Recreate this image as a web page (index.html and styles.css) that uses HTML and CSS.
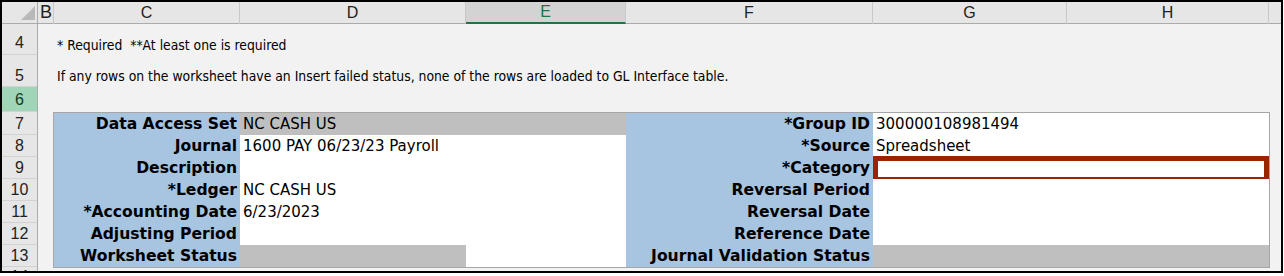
FILE: index.html
```html
<!DOCTYPE html>
<html lang="en">

<head>
    <title>Journal header</title>
    <meta charset="UTF-8">
    <meta name="viewport" content="width=device-width, initial-scale=1.0">
    <link rel="stylesheet" href="styles.css">
</head>
<body>
    <div class="frame">
        <div class="colheads">
            <div class="ch corner">
                <svg width="35" height="21" viewBox="0 0 35 21"><polygon points="33,4 33,18 19,18" fill="#b9b9b9"></polygon></svg>
            </div>
            <div class="ch big">B</div>
            <div class="ch">C</div>
            <div class="ch">D</div>
            <div class="ch sel">E</div>
            <div class="ch">F</div>
            <div class="ch">G</div>
            <div class="ch">H</div>
            <div class="ch last"></div>
        </div>

        <div class="body">
            <div class="rowheads">
                <div class="rh r4">4</div>
                <div class="rh r5">5</div>
                <div class="rh r6 sel">6</div>
                <div class="rh r7">7</div>
                <div class="rh">8</div>
                <div class="rh">9</div>
                <div class="rh">10</div>
                <div class="rh">11</div>
                <div class="rh">12</div>
                <div class="rh">13</div>
                <div class="rh r14">14</div>
            </div>

            <div class="cells">
                <div class="note r4">* Required&nbsp; **At least one is required</div>
                <div class="note r5">If any rows on the worksheet have an Insert failed status, none of the rows are loaded to GL Interface table.</div>
                <div class="note r6"></div>

                <div class="form">
                    <!-- ligne 7 -->
                    <div class="lbl">Data Access Set</div>
                    <div class="val gray span2">NC CASH US</div>
                    <div class="lbl">*Group ID</div>
                    <div class="val span2">300000108981494</div>
                    <!-- ligne 8 -->
                    <div class="lbl">Journal</div>
                    <div class="val">1600 PAY 06/23/23 Payroll</div>
                    <div class="val"></div>
                    <div class="lbl">*Source</div>
                    <div class="val span2">Spreadsheet</div>
                    <!-- ligne 9 -->
                    <div class="lbl">Description</div>
                    <div class="val"></div>
                    <div class="val"></div>
                    <div class="lbl">*Category</div>
                    <div class="val span2 req"></div>
                    <!-- ligne 10 -->
                    <div class="lbl">*Ledger</div>
                    <div class="val">NC CASH US</div>
                    <div class="val"></div>
                    <div class="lbl">Reversal Period</div>
                    <div class="val span2"></div>
                    <!-- ligne 11 -->
                    <div class="lbl">*Accounting Date</div>
                    <div class="val">6/23/2023</div>
                    <div class="val"></div>
                    <div class="lbl">Reversal Date</div>
                    <div class="val span2"></div>
                    <!-- ligne 12 -->
                    <div class="lbl">Adjusting Period</div>
                    <div class="val"></div>
                    <div class="val"></div>
                    <div class="lbl">Reference Date</div>
                    <div class="val span2"></div>
                    <!-- ligne 13 -->
                    <div class="lbl">Worksheet Status</div>
                    <div class="val gray"></div>
                    <div class="val"></div>
                    <div class="lbl">Journal Validation Status</div>
                    <div class="val gray span2"></div>
                </div>
            </div>
        </div>
    </div>
</body>
</html>
```

FILE: styles.css
```css
body {
    margin: 0;
    background-color: #fff;
    font-family: "DejaVu Sans", sans-serif;
    color: #000;
}

.frame {
    width: 1283px;
    height: 273px;
    box-sizing: border-box;
    border: 2px solid #000;
    overflow: hidden;
    background-color: #f2f2f2;
}

/****** EN-TETES DE COLONNES ******/
.colheads {
    display: grid;
    grid-template-columns: 36px 16px 186px 226px 160px 247px 194px 202px 1fr;
    height: 22px;
    box-sizing: border-box;
    background-color: #e6e6e6;
    border-bottom: 1px solid #ababab;
}
.ch {
    box-sizing: border-box;
    border-right: 1px solid #c8c8c8;
    font-family: "Liberation Sans", sans-serif;
    font-size: 16px;
    line-height: 21px;
    text-align: center;
    color: #222;
}
.ch.corner {
    border-right: 1px solid #ababab;
}
.ch.corner svg {
    display: block;
}
.ch.big {
    font-size: 18px;
    text-align: left;
    padding-left: 2px;
}
.ch.sel {
    background-color: #d3d3d3;
    color: #217346;
    border-bottom: 2px solid #217346;
    line-height: 20px;
}
.ch.last {
    border-right: none;
}

/****** EN-TETES DE LIGNES ******/
.body {
    display: flex;
}
.rowheads {
    width: 36px;
    flex: none;
    box-sizing: border-box;
    background-color: #e6e6e6;
    border-right: 1px solid #ababab;
}
.rh {
    height: 22px;
    box-sizing: border-box;
    border-bottom: 1px solid #d2d2d2;
    display: flex;
    align-items: flex-end;
    justify-content: center;
    font-family: "Liberation Sans", sans-serif;
    font-size: 16px;
    line-height: 20px;
    color: #222;
}
.rh.r4 { height: 31px; padding-bottom: 1px; }
.rh.r5 { height: 32px; padding-bottom: 0; }
.rh.r6 { height: 25px; padding-bottom: 1px; }
.rh.r7 { height: 23px; }
.rh.r14 {
    height: 12px;
    border-bottom: none;
    align-items: flex-start;
    overflow: hidden;
}
.rh.sel {
    background-color: #a0d5b7;
    color: #0d3f22;
}

/****** CELLULES ******/
.cells {
    flex: 1;
    padding-left: 15px;
}
.note {
    display: flex;
    align-items: flex-end;
    box-sizing: border-box;
    padding-left: 4px;
    font-family: "DejaVu Sans Condensed", "DejaVu Sans", sans-serif;
    font-size: 13.8px;
    line-height: 17px;
    white-space: nowrap;
}
.note.r4 { height: 31px; padding-bottom: 1px; }
.note.r5 { height: 32px; padding-bottom: 2px; }
.note.r6 { height: 25px; }

.form {
    display: grid;
    grid-template-columns: 186px 226px 160px 247px 194px 202px;
    grid-auto-rows: 22px;
    width: 1217px;
    box-sizing: border-box;
    border: 1px solid #a6a6a6;
}
.lbl {
    background-color: #a7c4e1;
    text-align: right;
    padding-right: 3px;
    font-weight: bold;
    font-size: 15.6px;
    line-height: 22px;
    white-space: nowrap;
}
.val {
    background-color: #fff;
    padding-left: 3px;
    font-size: 15px;
    line-height: 22px;
    white-space: nowrap;
}
.val.gray {
    background-color: #bfbfbf;
}
.span2 {
    grid-column: span 2;
}
.req {
    border: 5px solid #9a2400;
    margin: -1px 0 -3px 0;
}
```
